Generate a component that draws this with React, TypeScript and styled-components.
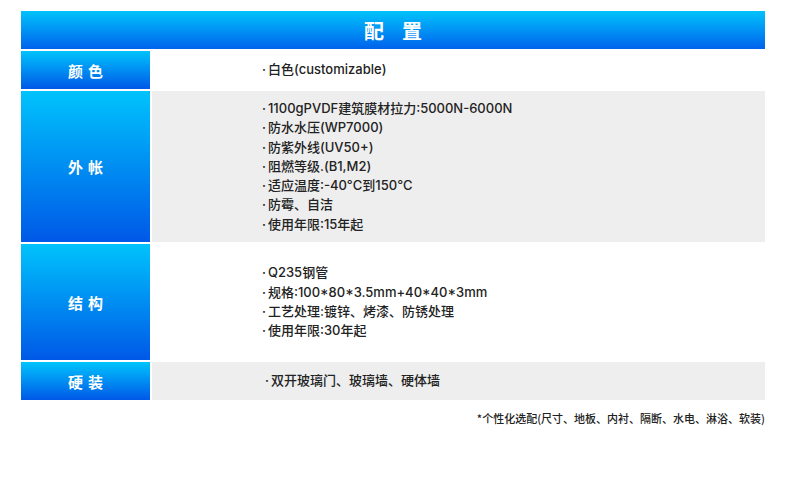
import { Fragment } from 'react';
import styled, { createGlobalStyle } from 'styled-components';

const GlobalStyle = createGlobalStyle`
  html, body {
    margin: 0;
    padding: 0;
    background: #ffffff;
  }

  body {
    font-family: 'Noto Sans CJK SC', 'Noto Sans', sans-serif;
    color: #222222;
  }
`;

const Page = styled.div`
  padding: 11px 0 0 21px;
  width: 744px;
`;

const Table = styled.div`
  display: grid;
  grid-template-columns: 129px 1fr;
  gap: 2px;
`;

const Title = styled.div`
  grid-column: 1 / -1;
  height: 38px;
  display: flex;
  align-items: center;
  justify-content: center;
  background: linear-gradient(180deg, #00c3fb 0%, #0062ec 100%);
  color: #ffffff;
  font-size: 20px;
  font-weight: 700;
  letter-spacing: 18px;
  padding-left: 18px;
`;

const Label = styled.div<{ $height: number }>`
  height: ${p => p.$height}px;
  display: flex;
  align-items: center;
  justify-content: center;
  background: linear-gradient(180deg, #00c3fc 0%, #0058e7 100%);
  color: #ffffff;
  font-size: 15px;
  font-weight: 700;
  letter-spacing: 5px;
  padding-left: 5px;
`;

const Value = styled.div<{ $shade: boolean; $indent?: number }>`
  display: flex;
  flex-direction: column;
  justify-content: center;
  padding-left: ${p => p.$indent ?? 110}px;
  background: ${p => (p.$shade ? '#eeeeee' : '#ffffff')};
  font-family: Inter, 'Noto Sans CJK SC', sans-serif;
  font-size: 13px;
  font-weight: 500;
  line-height: 19.3px;
  color: #222222;
`;

const Bullet = styled.span`
  margin-right: 2px;
`;

const Note = styled.div`
  margin-top: 10px;
  text-align: right;
  font-size: 11px;
  font-weight: 500;
  color: #222222;
`;

const rows = [
  { label: '颜色', height: 38, shade: false, items: ['白色(customizable)'] },
  {
    label: '外帐',
    height: 151,
    shade: true,
    items: [
      '1100gPVDF建筑膜材拉力:5000N-6000N',
      '防水水压(WP7000)',
      '防紫外线(UV50+)',
      '阻燃等级.(B1,M2)',
      '适应温度:-40°C到150°C',
      '防霉、自洁',
      '使用年限:15年起',
    ],
  },
  {
    label: '结构',
    height: 116,
    shade: false,
    items: ['Q235钢管', '规格:100*80*3.5mm+40*40*3mm', '工艺处理:镀锌、烤漆、防锈处理', '使用年限:30年起'],
  },
  { label: '硬装', height: 38, shade: true, indent: 113, items: ['双开玻璃门、玻璃墙、硬体墙'] },
];

const App = () => {
  return (
    <Page>
      <GlobalStyle />
      <Table>
        <Title>配置</Title>
        {rows.map(row => (
          <Fragment key={row.label}>
            <Label $height={row.height}>{row.label}</Label>
            <Value $shade={row.shade} $indent={row.indent}>
              {row.items.map(item => (
                <div key={item}>
                  <Bullet>·</Bullet>
                  {item}
                </div>
              ))}
            </Value>
          </Fragment>
        ))}
      </Table>
      <Note>*个性化选配(尺寸、地板、内衬、隔断、水电、淋浴、软装)</Note>
    </Page>
  );
};

export default App;
